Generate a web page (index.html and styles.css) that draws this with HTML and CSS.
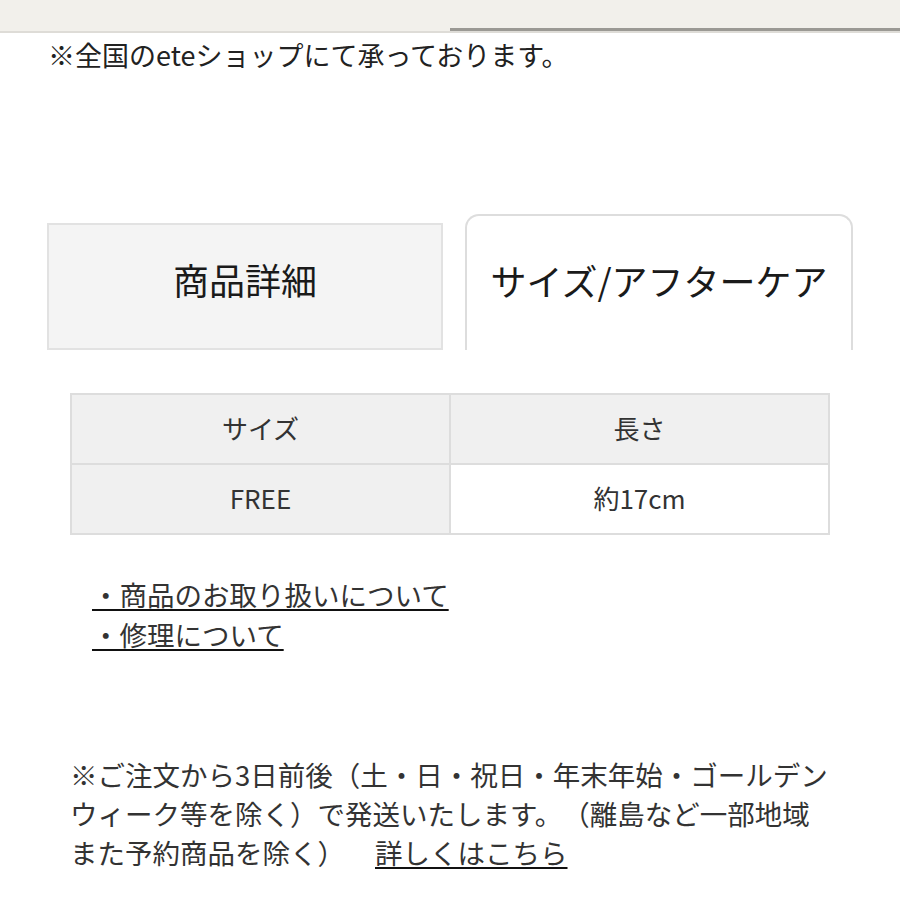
FILE: index.html
```html
<!DOCTYPE html>
<html lang="ja">
<head>
    <meta charset="UTF-8">
    <meta name="viewport" content="width=device-width, initial-scale=1.0">
    <title>サイズ/アフターケア</title>
    <link rel="stylesheet" href="styles.css">
</head>
<body>
    <div class="topbar">
        <div class="progress"></div>
    </div>

    <p class="notice">※全国のeteショップにて承っております。</p>

    <div class="tabs">
        <div class="tab">商品詳細</div>
        <div class="tab active">サイズ/アフターケア</div>
    </div>

    <table class="size-table">
        <tr>
            <th>サイズ</th>
            <th>長さ</th>
        </tr>
        <tr>
            <td class="grey">FREE</td>
            <td>約17cm</td>
        </tr>
    </table>

    <ul class="care-links">
        <li><a href="#">・商品のお取り扱いについて</a></li>
        <li><a href="#">・修理について</a></li>
    </ul>

    <p class="shipping">
        ※ご注文から3日前後（土・日・祝日・年末年始・ゴールデン<br>
        ウィーク等を除く）で発送いたします。（離島など一部地域<br>
        また予約商品を除く）<a href="#" class="more">詳しくはこちら</a>
    </p>
</body>
</html>
```

FILE: styles.css
```css
body {
    margin: 0;
    background: #ffffff;
    color: #222;
    font-family: "Noto Sans CJK JP", "Noto Sans", sans-serif;
    text-spacing-trim: space-all;
}
.topbar {
    height: 31px;
    background-color: #f2f0eb;
    border-bottom: 2px solid #dedcd7;
    display: flex;
    justify-content: flex-end;
    align-items: flex-end;
}
.progress {
    width: 450px;
    height: 3px;
    background-color: #9b9994;
}
.notice {
    margin: 2px 0 0 48px;
    font-size: 27px;
    line-height: 40px;
}
.tabs {
    display: flex;
    align-items: flex-end;
    gap: 22px;
    margin-top: 139px;
    padding-left: 47px;
}
.tab {
    box-sizing: border-box;
    width: 396px;
    height: 127px;
    padding-top: 29px;
    background-color: #f4f4f4;
    border: 2px solid #e2e2e2;
    font-size: 36px;
    line-height: 50px;
    text-align: center;
    color: #1a1a1a;
}
.tab.active {
    width: 388px;
    height: 136px;
    padding-top: 39px;
    background-color: #ffffff;
    border-color: #dddddd;
    border-bottom: none;
    border-radius: 14px 14px 0 0;
}
.size-table {
    width: 760px;
    margin: 43px 0 0 70px;
    border-collapse: collapse;
    table-layout: fixed;
}
.size-table th, .size-table td {
    height: 64px;
    padding: 0 0 4px;
    border: 2px solid #dddddd;
    font-size: 26px;
    font-weight: normal;
    text-align: center;
    color: #333;
}
.size-table th, .size-table td.grey {
    background-color: #f0f0f0;
}
.care-links {
    list-style: none;
    margin: 39px 0 0 92px;
    padding: 0;
    font-size: 27.5px;
    line-height: 40px;
}
.care-links a, .shipping a {
    color: #333;
    text-decoration: underline;
    text-decoration-thickness: 2px;
    text-underline-offset: 3px;
    text-decoration-color: #111;
}
.shipping {
    margin: 101px 0 0 70px;
    font-size: 27.5px;
    line-height: 39px;
    color: #333;
}
.more {
    margin-left: 30px;
}
```
